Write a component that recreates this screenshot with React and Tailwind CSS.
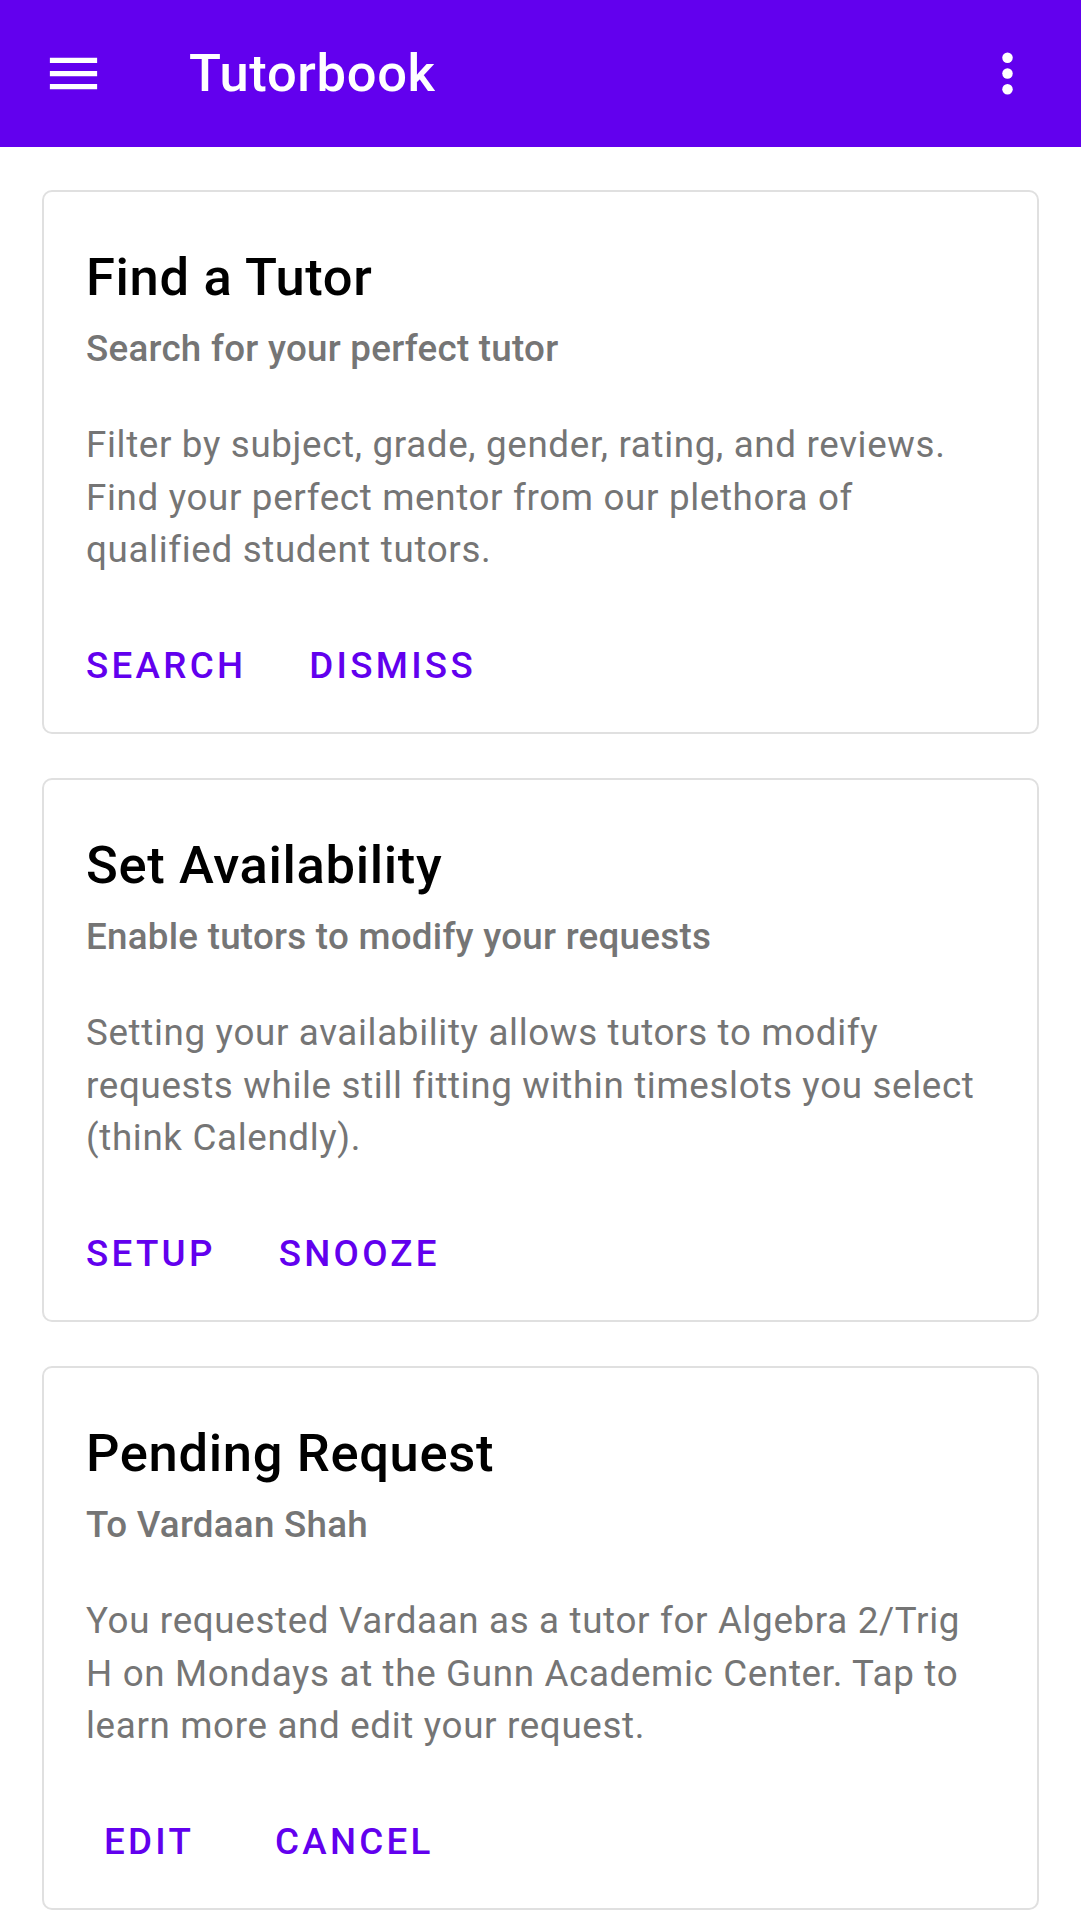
import React from "react";

const cards = [
  {
    title: "Find a Tutor",
    subtitle: "Search for your perfect tutor",
    body: "Filter by subject, grade, gender, rating, and reviews. Find your perfect mentor from our plethora of qualified student tutors.",
    actions: ["SEARCH", "DISMISS"],
  },
  {
    title: "Set Availability",
    subtitle: "Enable tutors to modify your requests",
    body: "Setting your availability allows tutors to modify requests while still fitting within timeslots you select (think Calendly).",
    actions: ["SETUP", "SNOOZE"],
  },
  {
    title: "Pending Request",
    subtitle: "To Vardaan Shah",
    body: "You requested Vardaan as a tutor for Algebra 2/Trig H on Mondays at the Gunn Academic Center. Tap to learn more and edit your request.",
    actions: ["EDIT", "CANCEL"],
  },
];

function MenuIcon() {
  return (
    <svg width="63" height="63" viewBox="0 0 24 24" fill="#ffffff">
      <path d="M3 18h18v-2H3v2zm0-5h18v-2H3v2zm0-7v2h18V6H3z" />
    </svg>
  );
}

function MoreIcon() {
  return (
    <svg width="63" height="63" viewBox="0 0 24 24" fill="#ffffff">
      <circle cx="12" cy="6" r="2" />
      <circle cx="12" cy="12" r="2" />
      <circle cx="12" cy="18" r="2" />
    </svg>
  );
}

function Card({ title, subtitle, body, actions }) {
  return (
    <div className="rounded-[10px] border-2 border-[#e0e0e0] bg-white h-[544px] flex flex-col">
      <div className="px-[42px] pt-[43px]">
        <div className="text-[52.5px] leading-[84px] font-medium text-black tracking-[0.0125em]">
          {title}
        </div>
        <div className="text-[36.75px] leading-[59px] font-medium text-[#757575] tracking-[0.007em]">
          {subtitle}
        </div>
        <div className="mt-[41px] text-[36.75px] leading-[52.5px] text-[#757575] tracking-[0.0179em]">
          {body}
        </div>
      </div>
      <div className="mt-[42px] pl-[21px] flex gap-[21px]">
        {actions.map((a) => (
          <button
            key={a}
            className="h-[94.5px] min-w-[168px] px-[21px] flex items-center justify-center text-[36.75px] font-medium tracking-[0.0892857em] text-[#6200ee] rounded-[10px]"
          >
            {a}
          </button>
        ))}
      </div>
    </div>
  );
}

export default function App() {
  return (
    <div
      className="w-[1081px] min-h-[1921px] bg-white"
      style={{ fontFamily: "Roboto, 'Noto Sans', sans-serif" }}
    >
      <header className="h-[147px] bg-[#6200ee] flex items-center pl-[42px] pr-[42px]">
        <MenuIcon />
        <div className="ml-[84px] text-[52.5px] font-medium text-white tracking-[0.0125em] leading-none flex-1">
          Tutorbook
        </div>
        <MoreIcon />
      </header>
      <main className="px-[42px] pt-[43px] flex flex-col gap-[44px]">
        {cards.map((c) => (
          <Card key={c.title} {...c} />
        ))}
      </main>
    </div>
  );
}
